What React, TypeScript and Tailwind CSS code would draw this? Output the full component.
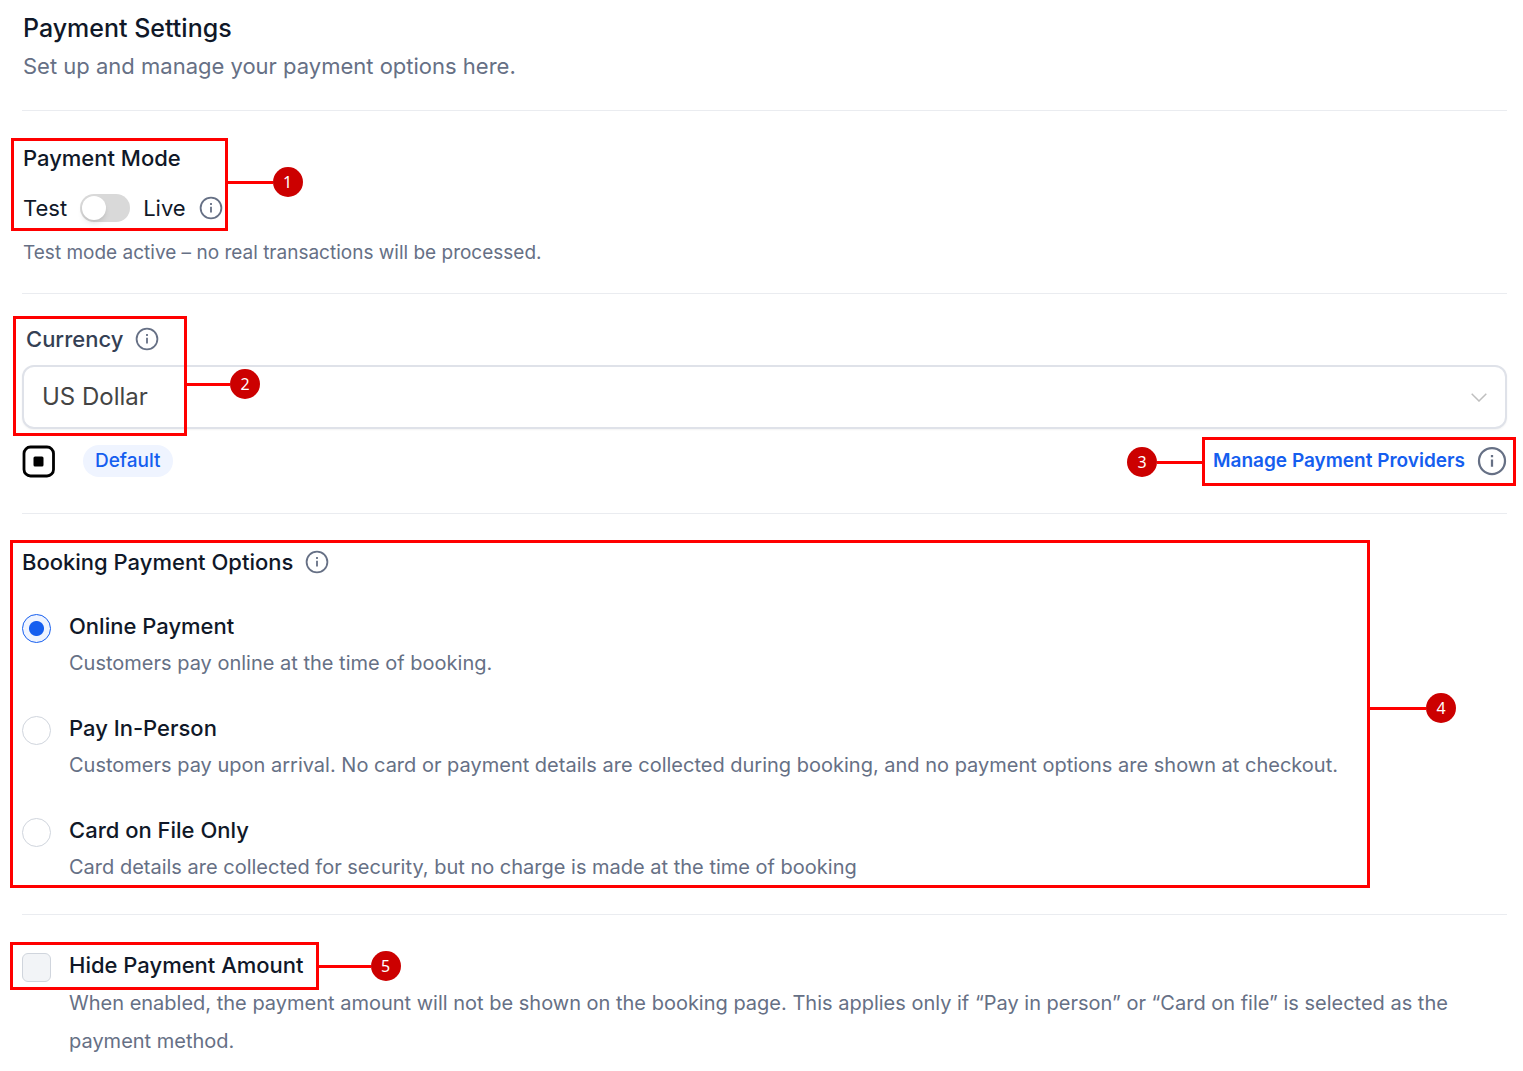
import { useState, type ReactNode } from "react"

const options = [
    {
        id: "online",
        title: "Online Payment",
        text: "Customers pay online at the time of booking.",
    },
    {
        id: "in-person",
        title: "Pay In-Person",
        text: "Customers pay upon arrival. No card or payment details are collected during booking, and no payment options are shown at checkout.",
    },
    {
        id: "card",
        title: "Card on File Only",
        text: "Card details are collected for security, but no charge is made at the time of booking",
    },
]

function InfoIcon({ className }: { className: string }) {
    return (
        <svg viewBox="0 0 24 24" fill="none" stroke="currentColor" strokeWidth="1.8" className={className}>
            <circle cx="12" cy="12" r="10.4" />
            <path d="M12 10.7v5.8M12 7.1v1.8" />
        </svg>
    )
}

function InfoButton({ label, className = "size-6" }: { label: string, className?: string }) {
    return (
        <button type="button" aria-label={label} className="cursor-pointer text-[#667085]">
            <InfoIcon className={className} />
        </button>
    )
}

// red frame with a numbered marker, drawn over the area it points at
function Callout(
    {
        frame, marker, line, children
    }: {
        frame: string,
        marker: string,
        line: string,
        children: ReactNode
    }) {
    return (
        <div className={`pointer-events-none absolute border-3 border-[#ff0000] ${frame}`}>
            <div className={`absolute flex items-center ${marker}`}>
                <span className={`h-[3px] bg-[#ff0000] ${line}`} />
                <span className="flex size-[30px] items-center justify-center rounded-full bg-[#cc0000] font-['Noto_Sans',sans-serif] text-base text-white">
                    {children}
                </span>
            </div>
        </div>
    )
}

export default function App() {
    const [live, setLive] = useState(false)
    const [currency, setCurrency] = useState("US Dollar")
    const [option, setOption] = useState("online")
    const [hideAmount, setHideAmount] = useState(false)

    return (
        <main className="bg-white pt-3 pr-4 pb-3 pl-[22px] font-['Inter',sans-serif] text-[#101828]">
            <header className="border-b border-[#eaecf0] pb-[30px] pl-px">
                <h1 className="text-[25px] leading-8 font-medium">Payment Settings</h1>
                <p className="mt-2 text-[22px] leading-7 text-[#667085]">Set up and manage your payment options here.</p>
            </header>

            <section className="border-b border-[#eaecf0] pt-[31px] pb-[26px] pl-px">
                <div className="relative w-fit">
                    <h2 className="text-[22px] leading-8 font-medium">Payment Mode</h2>
                    <div className="mt-[18px] flex h-8 items-center gap-[13px] text-[22px]">
                        <span>Test</span>
                        <label className="flex cursor-pointer">
                            <input
                                type="checkbox"
                                role="switch"
                                aria-label="Live mode"
                                checked={live}
                                onChange={(e) => setLive(e.target.checked)}
                                className="peer sr-only"
                            />
                            <span className="flex h-7 w-[50px] items-center rounded-full bg-[#d9d9d9] px-[2px] peer-checked:justify-end peer-checked:bg-blue-600">
                                <span className="size-6 rounded-full bg-white shadow-md" />
                            </span>
                        </label>
                        <span>Live</span>
                        <InfoButton label="About payment mode" />
                    </div>
                    <Callout frame="-top-1 -right-[5px] -bottom-[7px] -left-3" marker="left-full top-[26px]" line="w-12">1</Callout>
                </div>
                <p className="mt-[15px] text-[19px] leading-7 text-[#667085]">
                    Test mode active – no real transactions will be processed.
                </p>
            </section>

            <section className="relative border-b border-[#eaecf0] pt-[29px] pb-9">
                <div className="flex h-8 items-center gap-3 pl-1">
                    <label htmlFor="currency" className="text-[22px] font-medium text-[#344054]">Currency</label>
                    <InfoButton label="About currency" />
                </div>
                <div className="relative mt-[10px]">
                    <select
                        id="currency"
                        value={currency}
                        onChange={(e) => setCurrency(e.target.value)}
                        className="h-16 w-full cursor-pointer appearance-none rounded-xl border-2 border-[#dfe2e9] bg-white px-[18px] text-2xl text-[#444444] shadow-xs"
                    >
                        <option>US Dollar</option>
                        <option>Euro</option>
                    </select>
                    <svg viewBox="0 0 16 9" fill="none" stroke="currentColor" strokeWidth="1.5" className="pointer-events-none absolute top-7 right-5 w-4 text-[#bfbfbf]">
                        <path d="M0.7 0.7L8 8l7.3-7.3" />
                    </svg>
                </div>
                <Callout frame="top-[22px] -left-[9px] h-[120px] w-[174px]" marker="left-full top-[50px]" line="w-[46px]">2</Callout>

                <div className="mt-4 flex h-8 items-center justify-between">
                    <div className="flex items-center gap-7">
                        <svg viewBox="0 0 33 33" role="img" aria-label="Square" className="size-[33px]">
                            <rect x="2" y="2" width="29.5" height="29" rx="6.5" fill="none" stroke="#000" strokeWidth="2.8" />
                            <rect x="11.5" y="11.5" width="10" height="10" rx="1.5" />
                        </svg>
                        <span className="rounded-full bg-[#eff4ff] px-3 text-[19px] leading-8 font-medium text-[#155eef]">Default</span>
                    </div>
                    <div className="relative flex items-center gap-3">
                        <a href="#providers" className="text-[19px] font-semibold text-[#155eef]">Manage Payment Providers</a>
                        <InfoButton label="About payment providers" className="size-[30px]" />
                        <Callout frame="-top-[9px] -right-[9px] -left-[11px] h-[49px]" marker="right-full top-[7px] flex-row-reverse" line="w-12">3</Callout>
                    </div>
                </div>
            </section>

            <section className="border-b border-[#eaecf0] pt-8 pb-[31px]">
                <div className="relative w-fit">
                    <div className="flex h-8 items-center gap-3">
                        <h2 className="text-[22px] font-medium">Booking Payment Options</h2>
                        <InfoButton label="About booking payment options" />
                    </div>
                    <div className="mt-8 flex flex-col gap-[33px]">
                        {options.map((item) => (
                            <label key={item.id} className="flex cursor-pointer gap-[18px]">
                                <input
                                    type="radio"
                                    name="booking-option"
                                    checked={option === item.id}
                                    onChange={() => setOption(item.id)}
                                    className="mt-1 size-[29px] shrink-0 appearance-none rounded-full border border-[#d0d5dd] checked:border-[#155eef] checked:bg-[radial-gradient(#155eef_7px,#eff4ff_8px)]"
                                />
                                <span>
                                    <span className="block text-[22px] leading-8 font-medium">{item.title}</span>
                                    <span className="mt-[5px] block text-[20px] leading-8 text-[#667085]">{item.text}</span>
                                </span>
                            </label>
                        ))}
                    </div>
                    <Callout frame="-top-[6px] -right-8 -bottom-[5px] -left-3" marker="left-full top-[150px]" line="w-[59px]">4</Callout>
                </div>
            </section>

            <section className="flex gap-[18px] pt-[34px]">
                <input
                    id="hide-amount"
                    type="checkbox"
                    checked={hideAmount}
                    onChange={(e) => setHideAmount(e.target.checked)}
                    className="mt-1 size-[29px] shrink-0 appearance-none rounded-md border border-[#d0d5dd] bg-[#f2f4f7] checked:bg-[#155eef]"
                />
                <div>
                    <div className="relative w-fit">
                        <label htmlFor="hide-amount" className="block cursor-pointer text-[22px] leading-8 font-medium">
                            Hide Payment Amount
                        </label>
                        <Callout frame="-top-[7px] -right-[15px] -bottom-[9px] -left-[59px]" marker="left-full top-[6px]" line="w-[55px]">5</Callout>
                    </div>
                    <p className="mt-[3px] text-[20px] leading-[38px] text-[#667085]">
                        When enabled, the payment amount will not be shown on the booking page. This applies only if “Pay in person” or “Card on file” is selected as the payment method.
                    </p>
                </div>
            </section>
        </main>
    )
}
